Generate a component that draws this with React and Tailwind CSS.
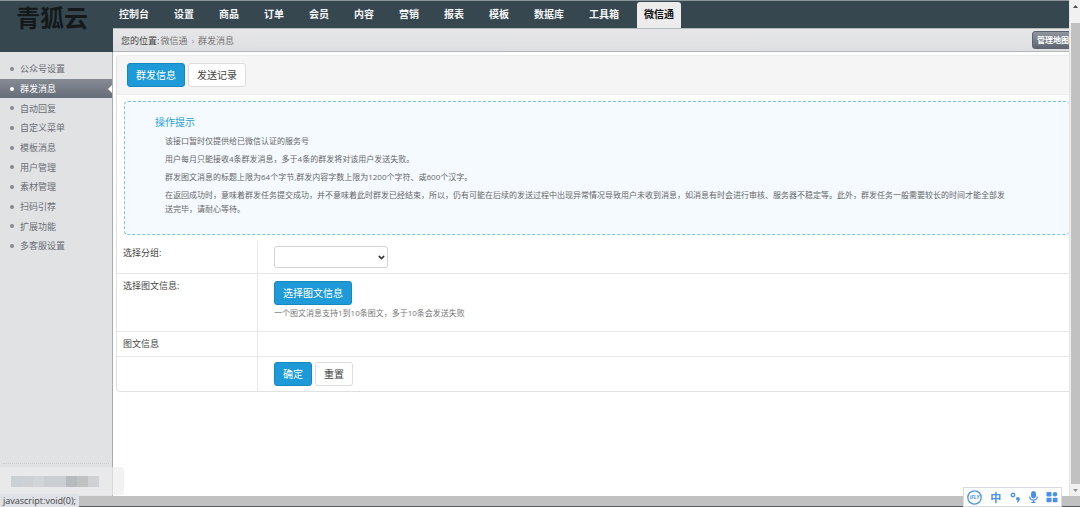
import { useState } from 'react';
import { ChevronDown } from 'lucide-react';

const navItems = ['控制台', '设置', '商品', '订单', '会员', '内容', '营销', '报表', '模板', '数据库', '工具箱', '微信通'];

const sideItems = [
  '公众号设置',
  '群发消息',
  '自动回复',
  '自定义菜单',
  '模板消息',
  '用户管理',
  '素材管理',
  '扫码引荐',
  '扩展功能',
  '多客服设置',
];

const mosaic = [
  'bg-[#cbd0d4]',
  'bg-[#cdd1d4]',
  'bg-[#d2d5d8]',
  'bg-[#cbcfd3]',
  'bg-[#cbcfd3]',
  'bg-[#b8bbbd]',
  'bg-[#bfc1c2]',
  'bg-[#cfd2d4]',
];

function Button({ primary, children, ...props }) {
  return (
    <button
      type="button"
      className={`h-6 shrink-0 whitespace-nowrap rounded-[3px] border px-2 text-[10px] leading-[22px] ${
        primary
          ? 'border-[#1787c0] bg-[#1e9ad8] text-white'
          : 'border-[#dcdcdc] bg-white text-[#444]'
      }`}
      {...props}
    >
      {children}
    </button>
  );
}

function Header() {
  return (
    <header className="flex h-[52px] shrink-0 border-t border-[#8a9499] bg-[#37474f]">
      <div className="w-28 shrink-0 pt-1 pl-4 font-['Noto_Sans_CJK_SC',sans-serif] text-2xl leading-6 font-bold whitespace-nowrap text-[#14191c]">
        青狐云
      </div>
      <div className="flex min-w-0 flex-1 flex-col">
        <nav className="flex h-[27px] shrink-0 items-end gap-[11px]">
          {navItems.map((item) => (
            <a
              key={item}
              href="#"
              className={`h-[26px] shrink-0 rounded-t-[3px] px-[7px] text-[10px] leading-[25px] font-bold ${
                item === '微信通' ? 'bg-[#ececed] text-[#111]' : 'text-[#f4f6f7]'
              }`}
            >
              {item}
            </a>
          ))}
        </nav>
        <div className="ml-px flex flex-1 items-center overflow-hidden border-t border-b border-t-[#b4b9bc] border-b-[#b4b6ba] bg-linear-to-b from-[#e6e6e8] to-[#dedfe1] pl-2 text-[9px] text-[#777]">
          <div className="flex pt-[2px]">
            <span className="mr-px text-[#444]">您的位置:</span>
            <a href="#">微信通</a>
            <span className="mx-1 text-[#999]">›</span>
            <span>群发消息</span>
          </div>
          <button
            type="button"
            className="-mr-[5px] ml-auto h-[18px] shrink-0 rounded-[3px] border border-[#5d636d] bg-linear-to-b from-[#91959d] to-[#5f6671] px-1 text-[8px] leading-4 font-bold text-white"
          >
            管理地图
          </button>
        </div>
      </div>
    </header>
  );
}

function Sidebar() {
  return (
    <aside className="flex w-[113px] shrink-0 flex-col border-r border-[#a6abb4] bg-[#e1e2e4] pt-[7px]">
      <ul className="flex h-[197px] shrink-0 flex-col text-[9px]">
        {sideItems.map((item) => {
          const active = item === '群发消息';
          return (
            <li
              key={item}
              className={`relative flex flex-1 items-center pl-[10px] ${
                active ? 'bg-linear-to-b from-[#868b94] to-[#676d78] text-white' : 'text-[#6a6e74]'
              }`}
            >
              <span className={`mr-[6px] size-1 rounded-full ${active ? 'bg-white' : 'bg-[#858990]'}`} />
              <a href="#">{item}</a>
              {active && (
                <svg className="absolute right-0 h-2 w-1" viewBox="0 0 4 8" fill="#fff">
                  <path d="M4 0v8L0 4z" />
                </svg>
              )}
            </li>
          );
        })}
      </ul>
      <div className="mx-[3px] mt-auto mb-8 border-t border-dotted border-[#c9cbce]" />
    </aside>
  );
}

function Tips() {
  return (
    <section className="mt-[6px] ml-[7px] h-[134px] rounded-[4px] border border-r-0 border-dashed border-[#7fc4e8] bg-[#f4faff] pt-3 pl-[30px]">
      <h2 className="text-[10px] leading-4 text-[#2b9fd9]">操作提示</h2>
      <ul className="mt-1 flex flex-col gap-1 pl-[10px] text-[8px] leading-[14px] text-[#666]">
        <li>该接口暂时仅提供给已微信认证的服务号</li>
        <li>用户每月只能接收4条群发消息，多于4条的群发将对该用户发送失败。</li>
        <li>群发图文消息的标题上限为64个字节,群发内容字数上限为1200个字符、或600个汉字。</li>
        <li>
          在返回成功时，意味着群发任务提交成功，并不意味着此时群发已经结束，所以，仍有可能在后续的发送过程中出现异常情况导致用户未收到消息，如消息有时会进行审核、服务器不稳定等。此外，群发任务一般需要较长的时间才能全部发
          <br />
          送完毕，请耐心等待。
        </li>
      </ul>
    </section>
  );
}

function Row({ label, htmlFor, className, children }) {
  return (
    <div className={`flex border-b border-[#e8e8e8] last:border-b-0 ${className}`}>
      <div className="w-[141px] shrink-0 border-r border-[#e8e8e8] pt-[5px] pl-[6px] text-[9px] leading-[14px] text-[#444]">
        {label && <label htmlFor={htmlFor}>{label}</label>}
      </div>
      <div className="flex-1 pt-[5px] pl-4">{children}</div>
    </div>
  );
}

function MessageForm() {
  const [group, setGroup] = useState('');

  return (
    <form className="mt-[6px] flex flex-col">
      <Row label="选择分组:" htmlFor="group" className="h-[33px]">
        <div className="relative w-[114px]">
          <select
            id="group"
            value={group}
            onChange={(e) => setGroup(e.target.value)}
            className="block h-[22px] w-full appearance-none rounded-[3px] border border-[#d4d4d4] bg-white px-2 text-[10px]"
          >
            <option value=""></option>
          </select>
          <ChevronDown size={9} strokeWidth={4} className="pointer-events-none absolute top-[7px] right-[2px] text-[#333]" />
        </div>
      </Row>
      <Row label="选择图文信息:" htmlFor="article" className="h-[58px]">
        <Button primary id="article">选择图文信息</Button>
        <p className="mt-px text-[8px] leading-[14px] text-[#777]">
          一个图文消息支持1到10条图文，多于10条会发送失败
        </p>
      </Row>
      <Row label="图文信息" className="h-[25px]" />
      <Row className="h-[34px]">
        <div className="flex gap-[3px]">
          <Button primary>确定</Button>
          <Button>重置</Button>
        </div>
      </Row>
    </form>
  );
}

function VerticalScrollbar() {
  return (
    <div className="flex w-[11px] shrink-0 flex-col items-center border-l border-[#e4e4e4] bg-[#f1f1f1]">
      <div className="flex h-[23px] shrink-0 items-start pt-[5px]">
        <svg width="5" height="3" viewBox="0 0 5 3" fill="#505050">
          <path d="M0 3h5L2.5 0z" />
        </svg>
      </div>
      <div className="w-[9px] flex-1 bg-[#c1c1c1]" />
      <div className="flex h-3 shrink-0 items-center">
        <svg width="5" height="3" viewBox="0 0 5 3" fill="#909090">
          <path d="M0 0h5L2.5 3z" />
        </svg>
      </div>
    </div>
  );
}

function ImeBar() {
  return (
    <div className="absolute right-[18px] bottom-0 flex h-5 w-[99px] items-center justify-between border border-[#d8dbe0] bg-white px-[3px] text-[#4a90e8]">
      <svg width="15" height="15" viewBox="0 0 15 15">
        <circle cx="7.5" cy="7.5" r="6.7" fill="none" stroke="currentColor" strokeWidth="1.3" />
        <text x="7.5" y="9.4" textAnchor="middle" fontSize="5" fontWeight="700" fontStyle="italic" fill="currentColor">
          iFLY
        </text>
      </svg>
      <span className="text-[11px] leading-none font-bold">中</span>
      <svg width="11" height="11" viewBox="0 0 11 11">
        <circle cx="3" cy="3" r="1.7" fill="none" stroke="currentColor" strokeWidth="1.4" />
        <path d="M6 6.8a1.9 1.9 0 1 1 3.8 0c0 1.9-1 3.2-2.6 3.9l-.6-.9c.8-.4 1.2-.8 1.3-1.4-1.100 0-1.900-.6-1.900-1.600z" fill="currentColor" />
      </svg>
      <svg width="9" height="12" viewBox="0 0 9 12" fill="none" stroke="currentColor">
        <rect x="2.5" y="0.5" width="4" height="6.5" rx="2" fill="currentColor" />
        <path d="M.7 5.5c0 2.3 1.7 3.5 3.8 3.5s3.8-1.2 3.8-3.5M4.5 9v2M2.5 11.3h4" strokeWidth="1.2" />
      </svg>
      <svg width="12" height="12" viewBox="0 0 12 12" fill="currentColor">
        <rect x="0.5" y="1" width="5" height="4.5" rx="0.8" />
        <circle cx="9" cy="3.2" r="2.3" />
        <rect x="0.5" y="6.7" width="5" height="4.5" rx="0.8" />
        <rect x="6.7" y="6.7" width="4.8" height="4.5" rx="0.8" />
      </svg>
    </div>
  );
}

export default function App() {
  return (
    <div className="relative flex h-screen flex-col overflow-hidden bg-white font-['Open_Sans','Noto_Sans_CJK_SC',sans-serif]">
      <div className="flex min-h-0 flex-1">
        <div className="flex min-w-0 flex-1 flex-col">
          <Header />
          <div className="flex min-h-0 flex-1">
            <Sidebar />
            <main className="min-w-0 flex-1 overflow-hidden pt-[3px] pl-[3px]">
              <div className="rounded-l-[4px] border-l border-b border-[#e0e0e0]">
                <div className="flex h-10 items-center gap-[3px] rounded-tl-[4px] border-t border-b border-[#ececec] bg-[#f5f5f5] pl-[10px]">
                  <Button primary>群发信息</Button>
                  <Button>发送记录</Button>
                </div>
                <Tips />
                <MessageForm />
              </div>
            </main>
          </div>
        </div>
        <VerticalScrollbar />
      </div>
      <div className="h-[11px] shrink-0 border-b border-[#55595c] bg-[#c1c1c1]" />

      {/* Masked account name at the foot of the sidebar */}
      <div className="absolute bottom-3 left-0 flex h-7 w-[124px] items-center rounded-r-[4px] bg-[#ededee]/70 pl-[11px]">
        {mosaic.map((color, i) => (
          <span key={i} className={`h-[11px] w-[11px] ${color}`} />
        ))}
      </div>

      {/* Browser status text */}
      <div className="absolute bottom-0 left-0 h-[13px] w-[79px] bg-[#dee1e6] pl-[3px] text-[9px] leading-[13px] whitespace-nowrap text-[#444]">
        javascript:void(0);
      </div>
      <ImeBar />
    </div>
  );
}
